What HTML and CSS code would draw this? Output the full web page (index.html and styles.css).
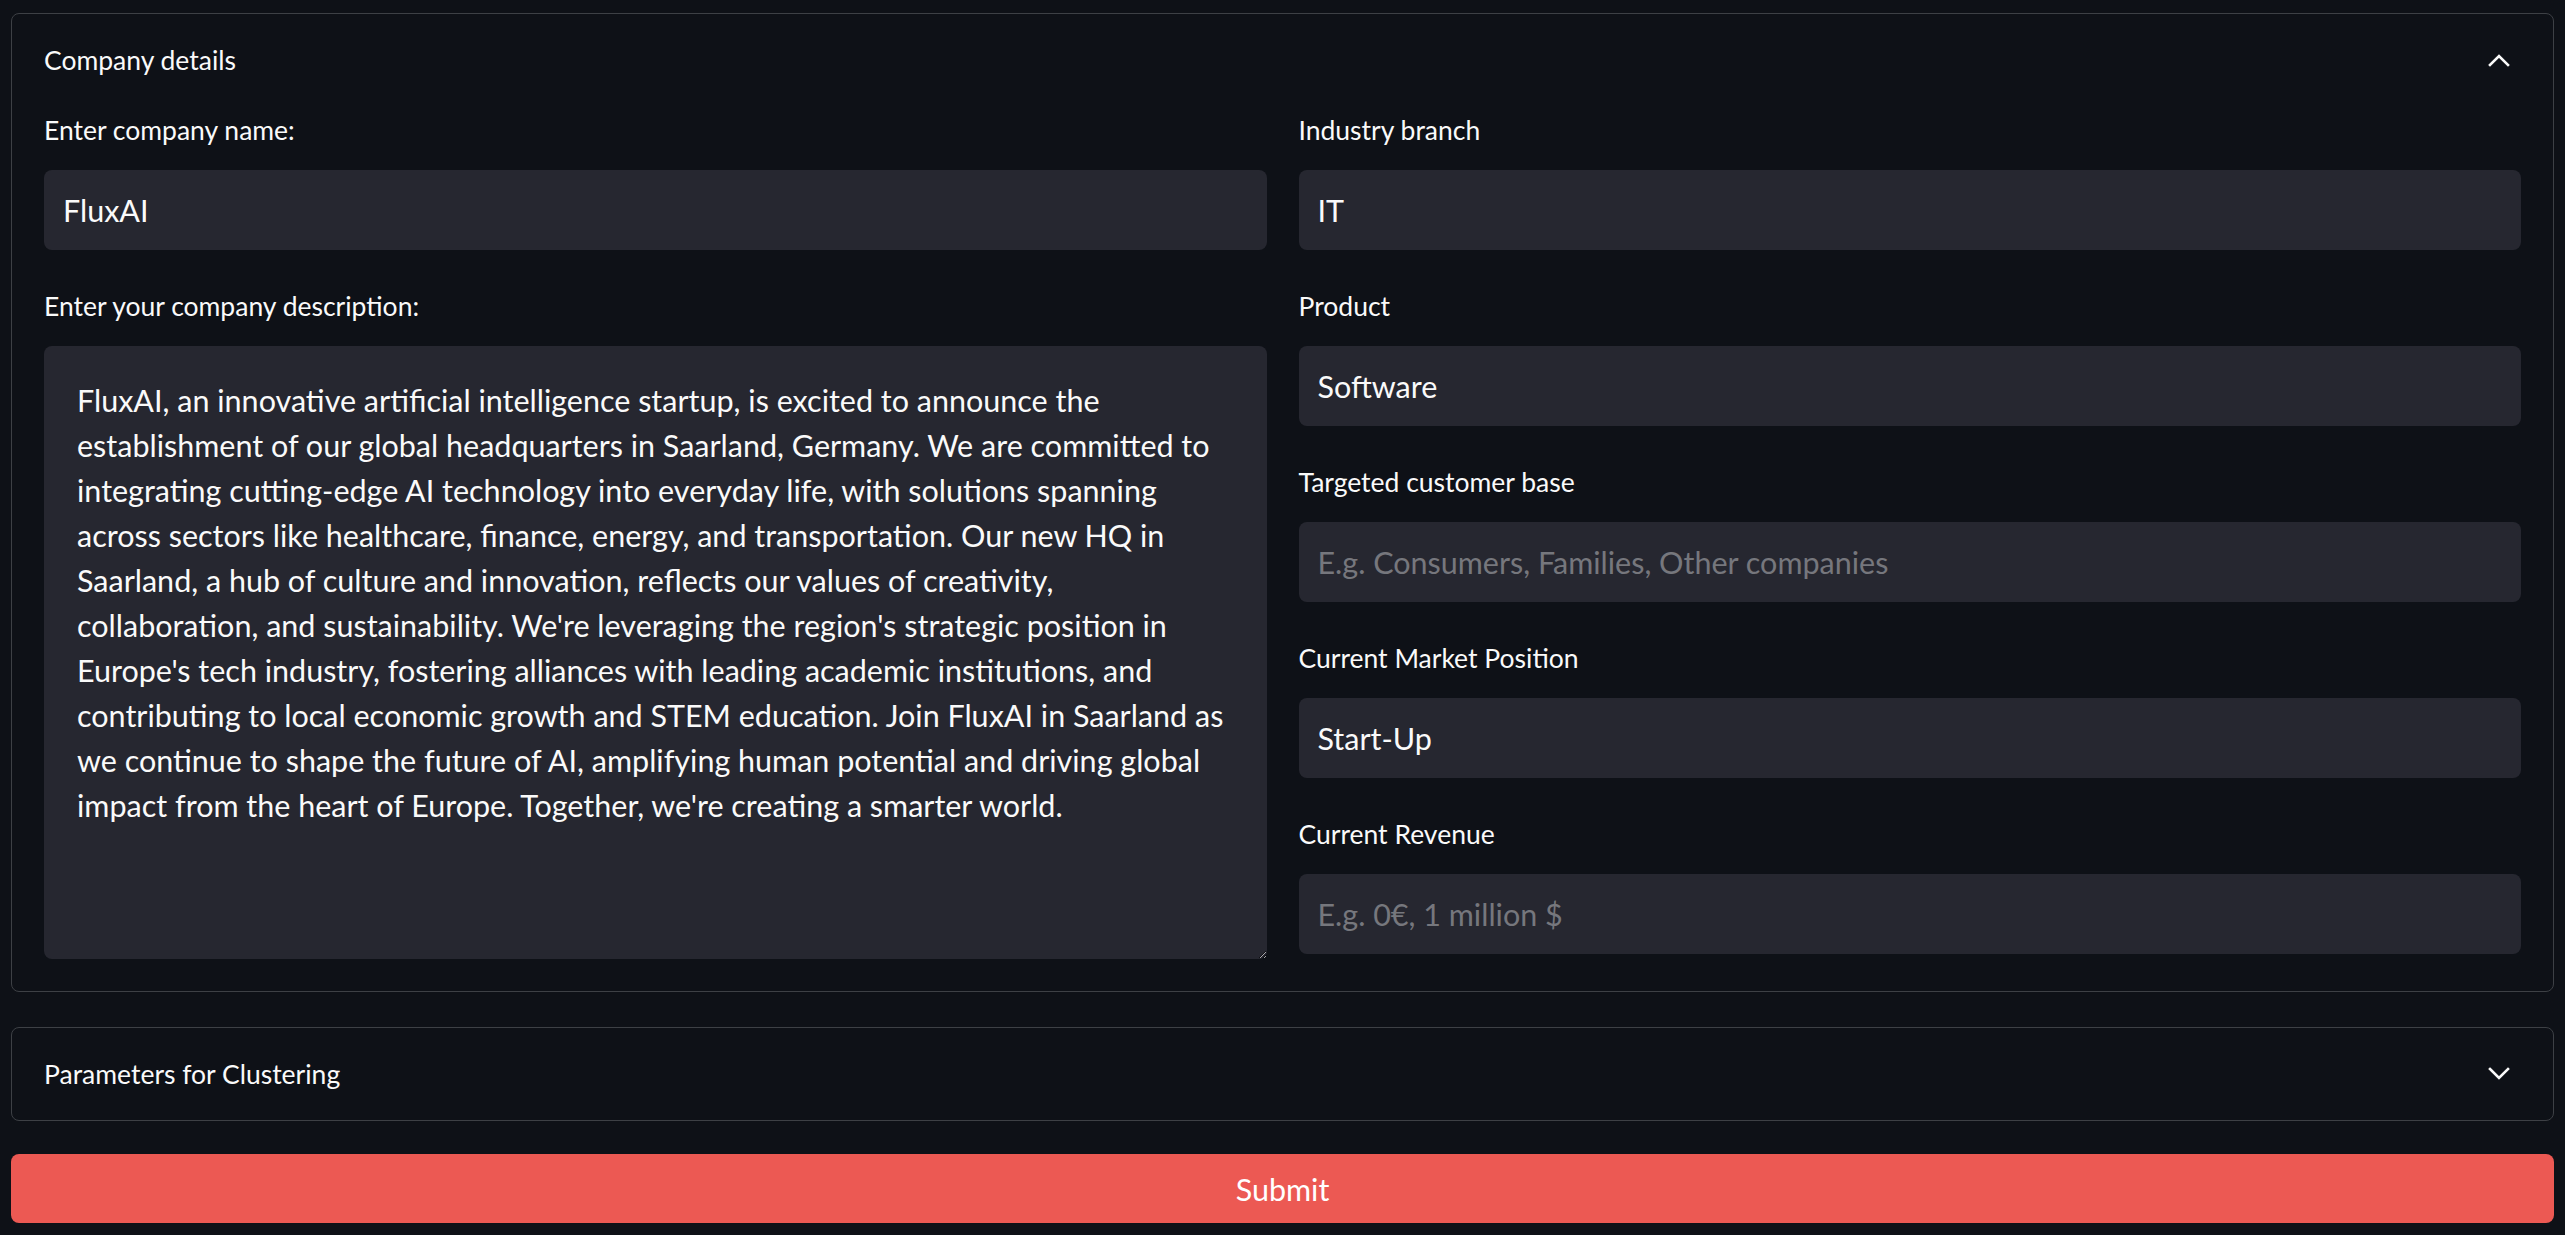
FILE: index.html
```html
<!DOCTYPE html>
<html lang="en">
<head>
<meta charset="utf-8">
<title>Company details</title>
<link rel="stylesheet" href="styles.css">
</head>
<body>
<main class="page">
  <details class="expander" open>
    <summary class="expander-head">
      <span>Company details</span>
      <svg class="chev" viewBox="0 0 22 14" width="22" height="14"><polyline points="2,12 11,3 20,12"/></svg>
    </summary>
    <div class="expander-body">
      <div class="col">
        <div class="field">
          <label class="label">Enter company name:</label>
          <input class="input" type="text" value="FluxAI">
        </div>
        <div class="field">
          <label class="label">Enter your company description:</label>
          <textarea class="textarea">FluxAI, an innovative artificial intelligence startup, is excited to announce the
establishment of our global headquarters in Saarland, Germany. We are committed to
integrating cutting-edge AI technology into everyday life, with solutions spanning
across sectors like healthcare, finance, energy, and transportation. Our new HQ in
Saarland, a hub of culture and innovation, reflects our values of creativity,
collaboration, and sustainability. We're leveraging the region's strategic position in
Europe's tech industry, fostering alliances with leading academic institutions, and
contributing to local economic growth and STEM education. Join FluxAI in Saarland as
we continue to shape the future of AI, amplifying human potential and driving global
impact from the heart of Europe. Together, we're creating a smarter world.</textarea>
        </div>
      </div>
      <div class="col">
        <div class="field">
          <label class="label">Industry branch</label>
          <input class="input" type="text" value="IT">
        </div>
        <div class="field">
          <label class="label">Product</label>
          <input class="input" type="text" value="Software">
        </div>
        <div class="field">
          <label class="label">Targeted customer base</label>
          <input class="input" type="text" placeholder="E.g. Consumers, Families, Other companies">
        </div>
        <div class="field">
          <label class="label">Current Market Position</label>
          <input class="input" type="text" value="Start-Up">
        </div>
        <div class="field">
          <label class="label">Current Revenue</label>
          <input class="input" type="text" placeholder="E.g. 0€, 1 million $">
        </div>
      </div>
    </div>
  </details>

  <details class="expander second">
    <summary class="expander-head">
      <span>Parameters for Clustering</span>
      <svg class="chev" viewBox="0 0 22 14" width="22" height="14"><polyline points="2,2 11,11 20,2"/></svg>
    </summary>
  </details>

  <button class="submit" type="button">Submit</button>
</main>
</body>
</html>
```
FILE: styles.css
```css
* { box-sizing: border-box; }

html, body {
  margin: 0;
  background: #0e1117;
}

body {
  padding: 13px 11px 12px;
  font-family: Lato, "Noto Sans", sans-serif;
  color: #fafafa;
}

.page {
  display: flex;
  flex-direction: column;
}

.expander {
  border: 1px solid #3d4045;
  border-radius: 8px;
}

.expander.second {
  margin-top: 35px;
}

.expander-head {
  list-style: none;
  height: 92px;
  display: flex;
  align-items: center;
  justify-content: space-between;
  padding: 0 43px 0 32px;
  font-size: 26.5px;
  cursor: pointer;
}

.expander-head::-webkit-details-marker { display: none; }

.chev {
  fill: none;
  stroke: #fafafa;
  stroke-width: 2.6;
  stroke-linecap: square;
}

.expander-body {
  display: grid;
  grid-template-columns: 1fr 1fr;
  gap: 32px;
  padding: 0 32px 32px;
}

.col {
  display: flex;
  flex-direction: column;
  gap: 32px;
}

.field {
  display: flex;
  flex-direction: column;
}

.label {
  height: 48px;
  line-height: 48px;
  margin-bottom: 16px;
  font-size: 26.5px;
  color: #fafafa;
}

.input {
  height: 80px;
  width: 100%;
  border: none;
  border-radius: 8px;
  background: #262730;
  color: #fafafa;
  padding: 0 19px;
  font-family: Lato, "Noto Sans", sans-serif;
  font-size: 30.5px;
  outline: none;
}

.input::placeholder {
  color: #76777d;
}

.textarea {
  height: 613px;
  width: 100%;
  border: none;
  border-radius: 8px;
  background: #262730;
  color: #fafafa;
  padding: 32px 20px 32px 33px;
  font-family: Lato, "Noto Sans", sans-serif;
  font-size: 30.5px;
  line-height: 45px;
  resize: vertical;
  outline: none;
  color-scheme: dark;
  overflow: hidden;
}

.submit {
  margin-top: 33px;
  height: 69px;
  width: 100%;
  border: none;
  border-radius: 8px;
  background: #ec5953;
  color: #ffffff;
  font-family: Lato, "Noto Sans", sans-serif;
  font-size: 30.5px;
}
```
